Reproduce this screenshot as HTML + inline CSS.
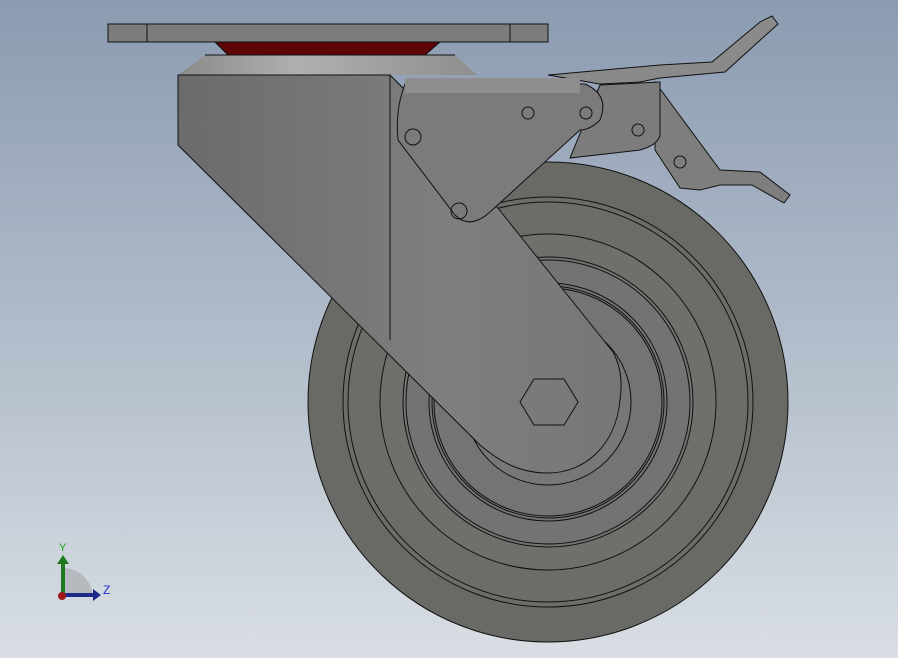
<!DOCTYPE html>
<html><head><style>
html,body{margin:0;padding:0;width:898px;height:658px;overflow:hidden}
body{background:linear-gradient(#8b9bb1,#b4bfcc 55%,#d9dee4)}
svg{position:absolute;left:0;top:0}
</style></head><body>
<svg width="898" height="658" viewBox="0 0 898 658" stroke="#111" stroke-width="1">
<defs>
<linearGradient id="fk" x1="0" x2="1"><stop offset="0" stop-color="#6b6b6b"/><stop offset="0.6" stop-color="#7e7e7e"/><stop offset="1" stop-color="#777"/></linearGradient>
<linearGradient id="cone" x1="0" x2="1"><stop offset="0" stop-color="#8a8a8a"/><stop offset="0.4" stop-color="#b0b0b0"/><stop offset="1" stop-color="#8e8e8e"/></linearGradient>
</defs>
<g fill="none">
<circle cx="548" cy="402" r="240" fill="#696965"/>
<circle cx="548" cy="402" r="205" fill="#6c6c68"/>
<circle cx="548" cy="402" r="200"/>
<circle cx="548" cy="402" r="168" fill="#6f6f6c"/>
<circle cx="548" cy="402" r="145" fill="#737372"/>
<circle cx="548" cy="402" r="142"/>
<circle cx="548" cy="402" r="119" fill="#747474"/>
<circle cx="548" cy="402" r="116"/>
<circle cx="548" cy="402" r="114"/>
<circle cx="548" cy="402" r="83" fill="#777"/>
</g>
<path d="M215,42 L440,42 L425,55 L228,55 Z" fill="#5e0606"/>
<rect x="108" y="24" width="440" height="18" fill="#7c7c7c"/>
<line x1="147" y1="24" x2="147" y2="42"/><line x1="510" y1="24" x2="510" y2="42"/>
<path d="M205,55 L455,55 L477,75 L178,75 Z" fill="url(#cone)" stroke="none"/>
<line x1="205" y1="55" x2="455" y2="55"/>
<path d="M178,75 L390,75 L405,90 L497,207 L613,352 Q624,372 620,400 C616,445 585,473 548,473 C520,473 500,462 480,445 L178,145 Z" fill="url(#fk)"/>
<line x1="390" y1="75" x2="390" y2="340"/>
<path d="M548,75 L660,65 L712,62 L760,22 L772,16 L778,24 L725,72 L660,78 L640,82 L600,84 Z" fill="#8a8a8a"/>
<path d="M655,82 L720,170 L760,172 L790,195 L784,203 L752,185 L720,185 L700,190 L680,188 L655,150 Z" fill="#7e7e7e"/>
<path d="M600,85 L660,82 L660,135 Q658,145 640,150 L570,158 Z" fill="#7c7c7c"/>
<path d="M405,84 L585,84 Q610,95 600,120 Q590,130 580,130 L490,212 Q470,230 455,215 L398,140 Q395,110 405,84 Z" fill="#7b7b7b"/>
<rect x="405" y="78" width="175" height="15" fill="#8e8e8e" stroke="none"/>
<g fill="none">
<circle cx="413" cy="137" r="8"/><circle cx="459" cy="211" r="8"/>
<circle cx="528" cy="113" r="6"/><circle cx="586" cy="113" r="6"/>
<circle cx="638" cy="130" r="6"/><circle cx="680" cy="162" r="6"/>
</g>
<path d="M520,402 L534,379 L564,379 L578,402 L564,425 L534,425 Z" fill="#7a7a7a"/>
<g stroke="none">
<path d="M63,597 L63,568 A30,30 0 0 1 93,597 Z" fill="#b6b9bd"/>
<rect x="61" y="562" width="4" height="35" fill="#1f7a1f"/>
<path d="M57,564 L63,555 L69,564 Z" fill="#1f7a1f"/>
<rect x="63" y="593" width="32" height="4" fill="#1e2a8a"/>
<path d="M93,589 L101,595 L93,601 Z" fill="#1e2a8a"/>
<circle cx="62" cy="596" r="4" fill="#a01818"/>
<text x="59" y="551" font-family="Liberation Sans,sans-serif" font-size="11" fill="#1fa31f">Y</text>
<text x="103" y="594" font-family="Liberation Sans,sans-serif" font-size="12" fill="#2233cc">Z</text>
</g>
</svg>
</body></html>
